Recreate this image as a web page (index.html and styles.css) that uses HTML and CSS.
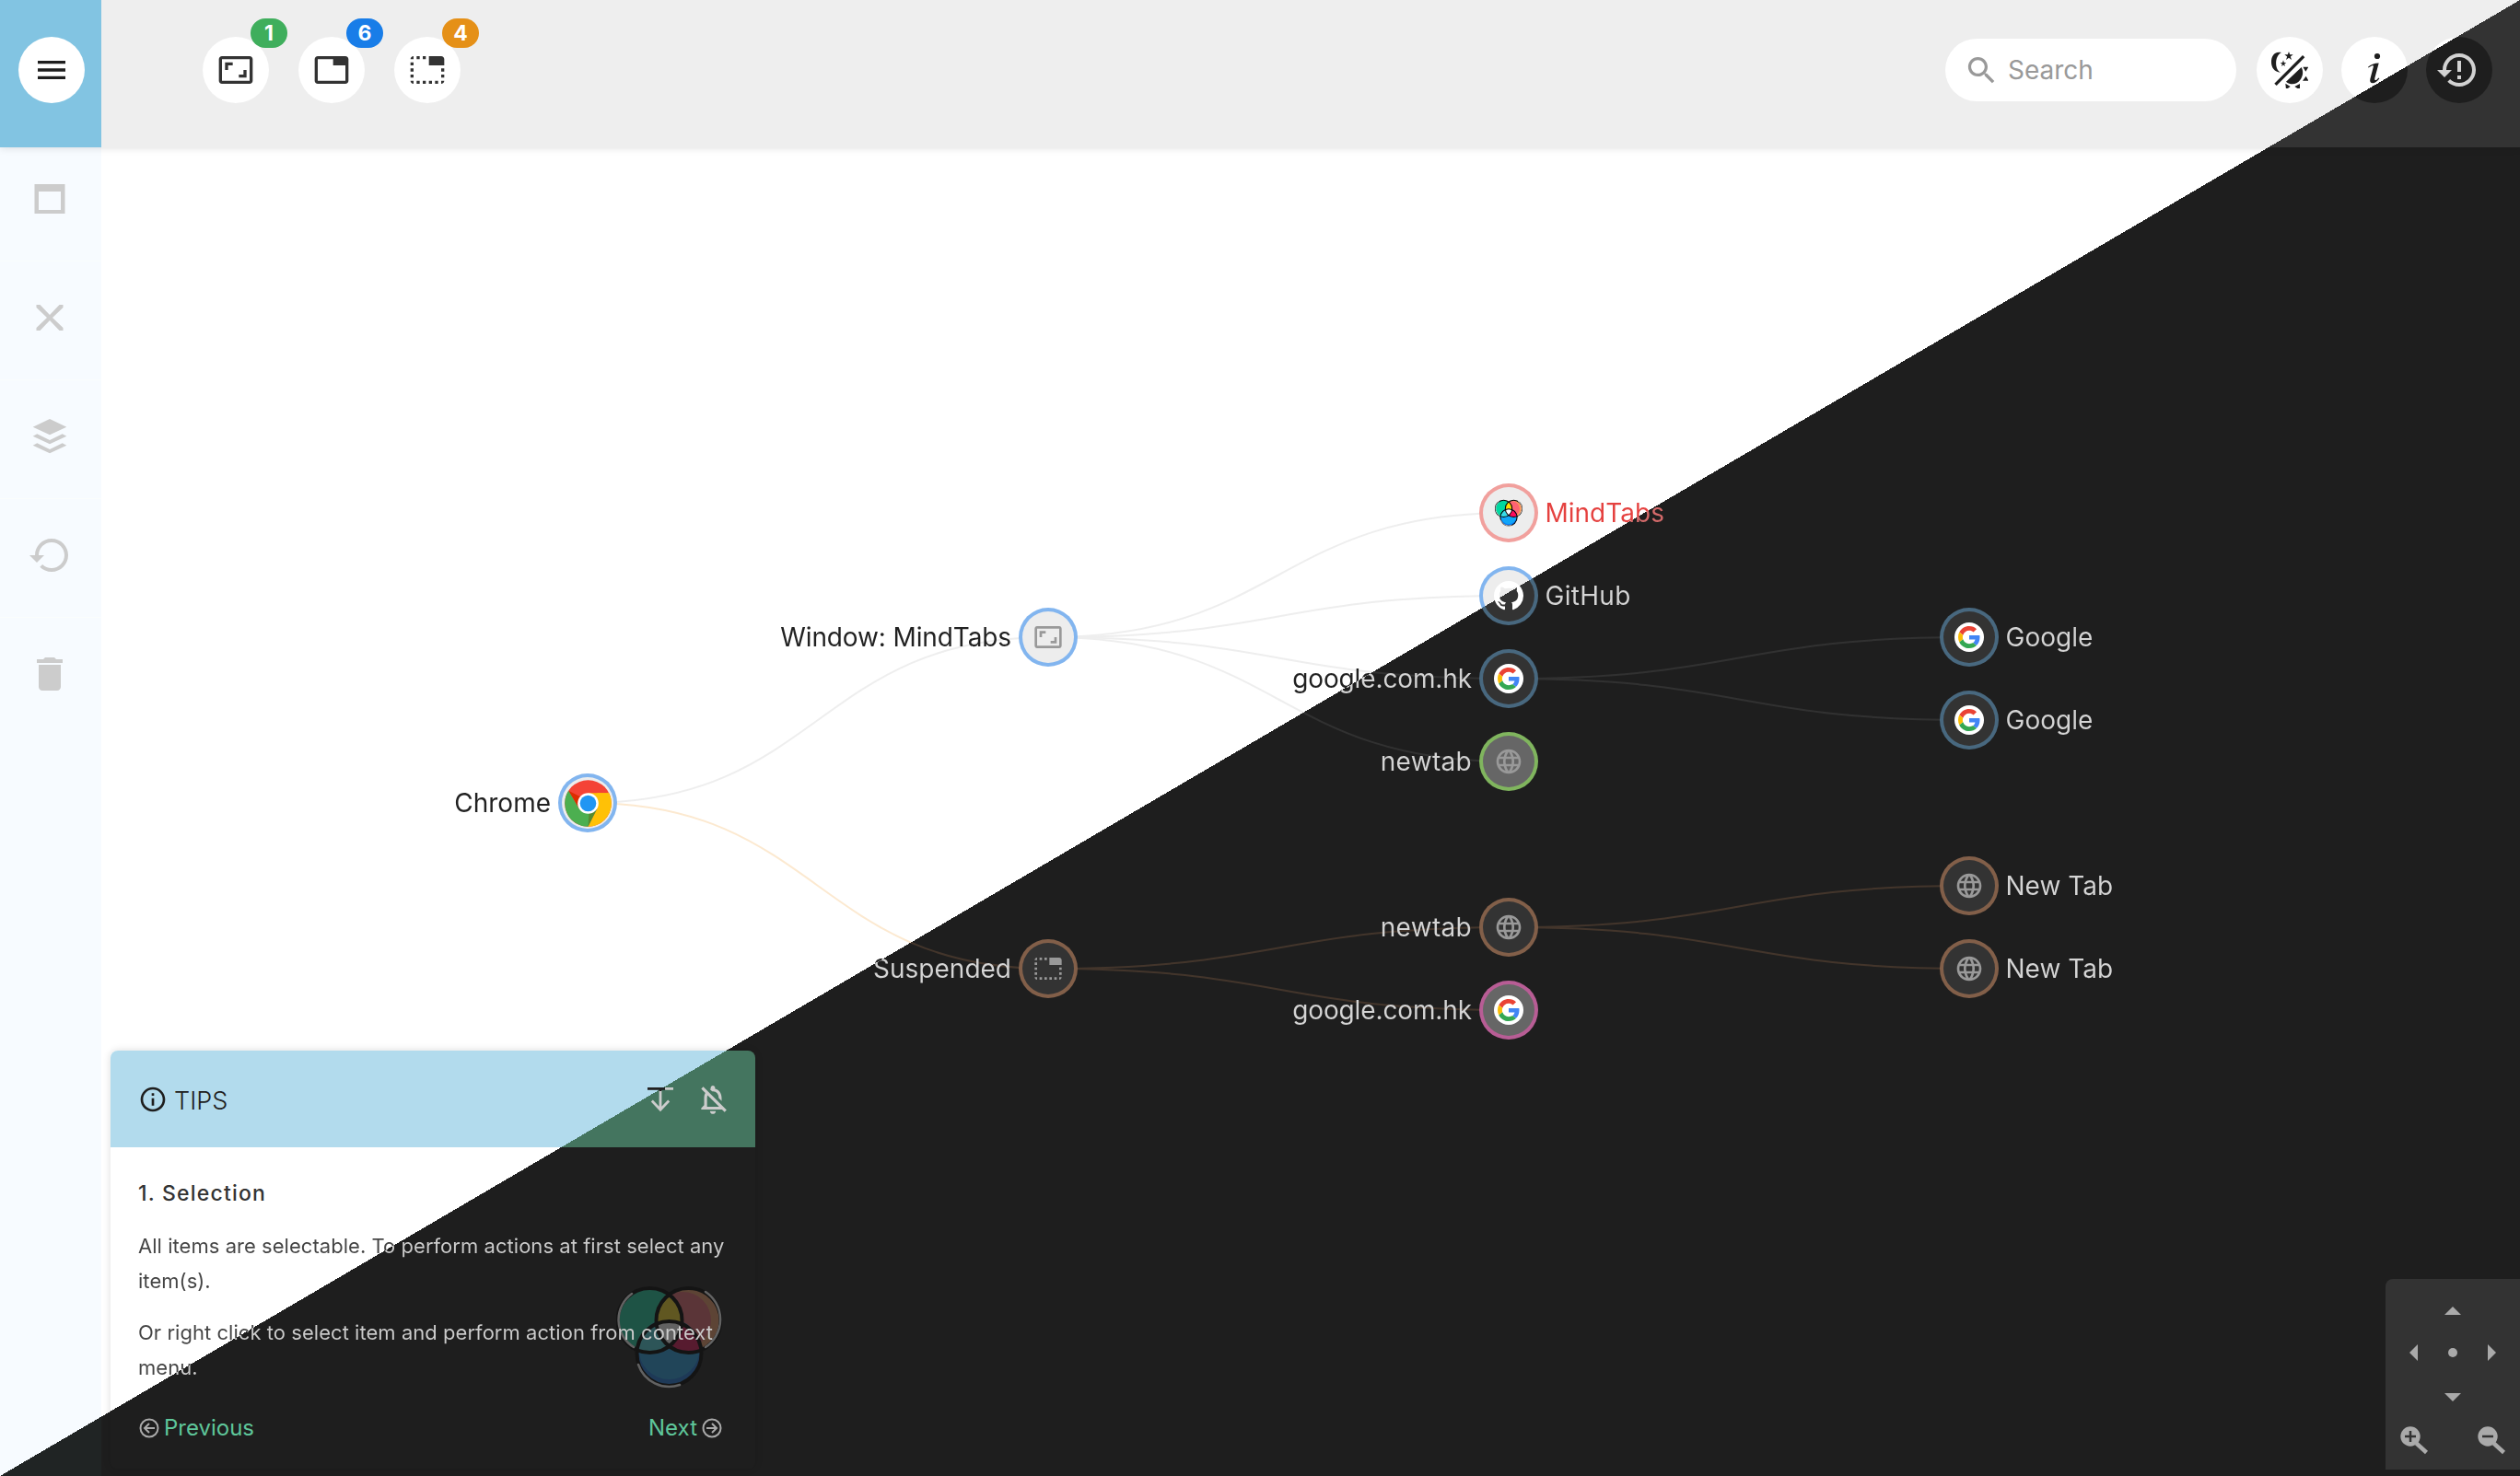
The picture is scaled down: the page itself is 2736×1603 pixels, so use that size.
FILE: index.html
```html
<!DOCTYPE html>
<html lang="en">
<head>
<meta charset="utf-8">
<title>MindTabs</title>
<link rel="stylesheet" href="styles.css">
</head>
<body>
<svg class="defs" aria-hidden="true">
  <defs>
    <linearGradient id="link" gradientUnits="userSpaceOnUse" x1="1207.7" y1="527.9" x2="1528.3" y2="1075.1">
      <stop offset=".5" stop-color="#eeeeee"/><stop offset=".5" stop-color="#313131"/>
    </linearGradient>
    <linearGradient id="link-suspended" gradientUnits="userSpaceOnUse" x1="1207.7" y1="527.9" x2="1528.3" y2="1075.1">
      <stop offset=".5" stop-color="#fce9d0"/><stop offset=".5" stop-color="#43352b"/>
    </linearGradient>
    <clipPath id="c-green"><circle cx="36.5" cy="39" r="35"/></clipPath>
    <clipPath id="c-red"><circle cx="78.5" cy="39" r="35"/></clipPath>
    <symbol id="aspect" viewBox="0 0 24 24"><path d="M19 12h-2v3h-3v2h5v-5zM7 9h3V7H5v5h2V9zm14-6H3c-1.1 0-2 .9-2 2v14c0 1.1.9 2 2 2h18c1.1 0 2-.9 2-2V5c0-1.1-.9-2-2-2zm0 16.01H3V4.99h18v14.02z"/></symbol>
    <symbol id="tab" viewBox="0 0 24 24"><path d="M21 3H3c-1.1 0-2 .9-2 2v14c0 1.1.9 2 2 2h18c1.1 0 2-.9 2-2V5c0-1.1-.9-2-2-2zm0 16H3V5h10v4h8v10z"/></symbol>
    <symbol id="tab-off" viewBox="0 0 24 24"><path d="M1 9h2V7H1v2zm0 4h2v-2H1v2zm0-8h2V3c-1.1 0-2 .9-2 2zm8 16h2v-2H9v2zm-8-4h2v-2H1v2zm2 4v-2H1c0 1.1.9 2 2 2zM21 3h-8v6h10V5c0-1.1-.9-2-2-2zm0 14h2v-2h-2v2zM9 5h2V3H9v2zM5 21h2v-2H5v2zM5 5h2V3H5v2zm16 16c1.1 0 2-.9 2-2h-2v2zm0-8h2v-2h-2v2zm-8 8h2v-2h-2v2zm4 0h2v-2h-2v2z"/></symbol>
    <symbol id="restore" viewBox="0 0 24 24"><path d="M13 3c-4.97 0-9 4.03-9 9H1l4 4 4-4H6c0-3.87 3.13-7 7-7s7 3.13 7 7-3.13 7-7 7c-1.93 0-3.68-.79-4.94-2.06l-1.42 1.42C8.27 19.99 10.51 21 13 21c4.97 0 9-4.03 9-9s-4.03-9-9-9z"/></symbol>
    <symbol id="globe" viewBox="0 0 24 24"><path d="M11.99 2C6.47 2 2 6.48 2 12s4.47 10 9.99 10C17.52 22 22 17.52 22 12S17.52 2 11.99 2zm6.93 6h-2.95c-.32-1.25-.78-2.45-1.38-3.56 1.84.63 3.37 1.91 4.33 3.56zM12 4.04c.83 1.2 1.48 2.53 1.91 3.96h-3.82c.43-1.43 1.08-2.76 1.91-3.96zM4.26 14C4.1 13.36 4 12.69 4 12s.1-1.36.26-2h3.38c-.08.66-.14 1.32-.14 2 0 .68.06 1.34.14 2H4.26zm.82 2h2.95c.32 1.25.78 2.45 1.38 3.56-1.84-.63-3.37-1.9-4.33-3.56zm2.95-8H5.08c.96-1.66 2.49-2.93 4.33-3.56C8.81 5.55 8.35 6.75 8.03 8zM12 19.96c-.83-1.2-1.48-2.53-1.91-3.96h3.82c-.43 1.43-1.08 2.76-1.91 3.96zM14.34 14H9.66c-.09-.66-.16-1.32-.16-2 0-.68.07-1.35.16-2h4.68c.09.65.16 1.32.16 2 0 .68-.07 1.34-.16 2zm.25 5.56c.6-1.11 1.06-2.31 1.38-3.56h2.95c-.96 1.65-2.49 2.93-4.33 3.56zM16.36 14c.08-.66.14-1.32.14-2 0-.68-.06-1.34-.14-2h3.38c.16.64.26 1.31.26 2s-.1 1.36-.26 2h-3.38z"/></symbol>
    <symbol id="google" viewBox="-8 -8 64 64">
      <circle cx="24" cy="24" r="32" fill="#fff"/>
      <path fill="#EA4335" d="M24 9.5c3.54 0 6.71 1.22 9.21 3.6l6.85-6.85C35.9 2.38 30.47 0 24 0 14.62 0 6.51 5.38 2.56 13.22l7.98 6.19C12.43 13.72 17.74 9.5 24 9.5z"/>
      <path fill="#4285F4" d="M46.98 24.55c0-1.57-.15-3.09-.38-4.55H24v9.02h12.94c-.58 2.96-2.26 5.48-4.78 7.18l7.73 6c4.51-4.18 7.09-10.36 7.09-17.65z"/>
      <path fill="#FBBC05" d="M10.53 28.59c-.48-1.45-.76-2.99-.76-4.59s.27-3.14.76-4.59l-7.98-6.19C.92 16.46 0 20.12 0 24c0 3.88.92 7.54 2.56 10.78l7.97-6.19z"/>
      <path fill="#34A853" d="M24 48c6.48 0 11.93-2.13 15.89-5.81l-7.73-6c-2.15 1.45-4.92 2.3-8.16 2.3-6.26 0-11.57-4.22-13.47-9.91l-7.98 6.19C6.51 42.62 14.62 48 24 48z"/>
    </symbol>
    <symbol id="mindtabs" viewBox="0 0 115 113">
      <circle cx="78.5" cy="39" r="35" fill="#ff9a5a"/>
      <circle cx="72" cy="39" r="31" fill="#ff6372" clip-path="url(#c-red)"/>
      <circle cx="36.5" cy="39" r="35" fill="#00d8a0"/>
      <circle cx="57.5" cy="75" r="35" fill="#0a7cf5"/>
      <circle cx="57.5" cy="70" r="33" fill="#10a6f8"/>
      <circle cx="78.5" cy="39" r="35" fill="#ffde00" clip-path="url(#c-green)"/>
      <circle cx="57.5" cy="75" r="35" fill="#38dbe8" clip-path="url(#c-green)"/>
      <circle cx="57.5" cy="75" r="35" fill="#ff0a5c" clip-path="url(#c-red)"/>
      <g clip-path="url(#c-red)"><circle cx="57.5" cy="75" r="35" fill="#fff" clip-path="url(#c-green)"/></g>
      <g fill="none" stroke="#000" stroke-width="4"><circle cx="36.5" cy="39" r="35"/><circle cx="78.5" cy="39" r="35"/><circle cx="57.5" cy="75" r="35"/></g>
      <g class="rim" fill="none" stroke="#fff" stroke-width="2.500" stroke-linecap="round"><path d="M19 68A35 35 0 0 1 17 10M97 8A36 36 0 0 1 97 68M24 87A35.500 35.500 0 0 0 69 109"/></g>
    </symbol>
  </defs>
</svg>

<div class="app">
  <section class="map">
    <svg class="links" width="2736" height="1603" viewBox="0 0 2736 1603">
      <g stroke="url(#link)">
        <path d="M638 872C888 872 888 692 1138 692"/>
        <path d="M1138 692C1388 692 1388 557 1638 557"/>
        <path d="M1138 692C1388 692 1388 647 1638 647"/>
        <path d="M1138 692C1388 692 1388 737 1638 737"/>
        <path d="M1138 692C1388 692 1388 827 1638 827"/>
        <path d="M1638 737C1888 737 1888 692 2138 692"/>
        <path d="M1638 737C1888 737 1888 782 2138 782"/>
      </g>
      <g stroke="url(#link-suspended)">
        <path d="M638 872C888 872 888 1052 1138 1052"/>
        <path d="M1138 1052C1388 1052 1388 1007 1638 1007"/>
        <path d="M1138 1052C1388 1052 1388 1097 1638 1097"/>
        <path d="M1638 1007C1888 1007 1888 962 2138 962"/>
        <path d="M1638 1007C1888 1007 1888 1052 2138 1052"/>
      </g>
    </svg>

    <div class="node blue parent" style="left:638px;top:872px">
      <div class="disc"><svg class="chrome" viewBox="-25.5 -25.5 51 51">
        <circle r="25.3" fill="#f44336"/>
        <path fill="#dd2c00" d="M-21.3-13.7-9.8 5.7-6-6z"/>
        <path fill="#4caf50" d="M-21.3-13.7A25.3 25.3 0 0 0 0 25.3L9.8 5.7-9.8 5.7z"/>
        <path fill="#ffc107" d="M22.7-11.3A25.3 25.3 0 0 1 0 25.3L9.8 5.7V-11.3z"/>
        <path fill="#ffc107" d="M0-11.3h22.7L9.8 5.7z"/>
        <path fill="#558b2f" d="M0 25.3 9.8 5.7 1 10.5z"/>
        <circle r="11.3" fill="#fff"/><circle r="8.8" fill="#2196f3"/>
      </svg></div><span class="label">Chrome</span>
    </div>
    <div class="node blue parent" style="left:1138px;top:692px">
      <div class="disc"><svg class="icon32"><use href="#aspect"/></svg></div><span class="label tight">Window: MindTabs</span>
    </div>
    <div class="node brown parent" style="left:1138px;top:1052px">
      <div class="disc"><svg class="icon32"><use href="#tab-off"/></svg></div><span class="label">Suspended</span>
    </div>
    <div class="node red leaf" style="left:1638px;top:557px">
      <div class="disc"><svg class="logo-small"><use href="#mindtabs"/></svg></div><span class="label active">MindTabs</span>
    </div>
    <div class="node blue leaf" style="left:1638px;top:647px">
      <div class="disc"><svg class="icon32 github" viewBox="0 0 16 16"><path d="M8 0C3.58 0 0 3.58 0 8c0 3.54 2.29 6.53 5.47 7.59.4.07.55-.17.55-.38 0-.19-.01-.82-.01-1.49-2.01.37-2.53-.49-2.69-.94-.09-.23-.48-.94-.82-1.13-.28-.15-.68-.52-.01-.53.63-.01 1.08.58 1.23.82.72 1.21 1.87.87 2.33.66.07-.52.28-.87.51-1.07-1.78-.2-3.64-.89-3.64-3.95 0-.87.31-1.59.82-2.15-.08-.2-.36-1.02.08-2.12 0 0 .67-.21 2.2.82.64-.18 1.32-.27 2-.27.68 0 1.36.09 2 .27 1.53-1.04 2.2-.82 2.2-.82.44 1.1.16 1.92.08 2.12.51.56.82 1.27.82 2.15 0 3.07-1.87 3.75-3.65 3.95.29.25.54.73.54 1.48 0 1.07-.01 1.93-.01 2.2 0 .21.15.46.55.38A8.013 8.013 0 0016 8c0-4.42-3.58-8-8-8z"/></svg></div><span class="label wide">GitHub</span>
    </div>
    <div class="node blue parent" style="left:1638px;top:737px">
      <div class="disc"><svg class="icon32"><use href="#google"/></svg></div><span class="label tight">google.com.hk</span>
    </div>
    <div class="node green parent selected" style="left:1638px;top:827px">
      <div class="disc"><svg class="icon32"><use href="#globe"/></svg></div><span class="label wide">newtab</span>
    </div>
    <div class="node brown parent" style="left:1638px;top:1007px">
      <div class="disc"><svg class="icon32"><use href="#globe"/></svg></div><span class="label wide">newtab</span>
    </div>
    <div class="node pink parent selected" style="left:1638px;top:1097px">
      <div class="disc"><svg class="icon32"><use href="#google"/></svg></div><span class="label tight">google.com.hk</span>
    </div>
    <div class="node blue leaf" style="left:2138px;top:692px">
      <div class="disc"><svg class="icon32"><use href="#google"/></svg></div><span class="label">Google</span>
    </div>
    <div class="node blue leaf" style="left:2138px;top:782px">
      <div class="disc"><svg class="icon32"><use href="#google"/></svg></div><span class="label">Google</span>
    </div>
    <div class="node brown leaf" style="left:2138px;top:962px">
      <div class="disc"><svg class="icon32"><use href="#globe"/></svg></div><span class="label">New Tab</span>
    </div>
    <div class="node brown leaf" style="left:2138px;top:1052px">
      <div class="disc"><svg class="icon32"><use href="#globe"/></svg></div><span class="label">New Tab</span>
    </div>
  </section>

  <header class="topbar">
    <div class="brand">
      <button class="round"><svg class="icon40 ink" viewBox="0 0 24 24"><path d="M3 18h18v-2H3v2zm0-5h18v-2H3v2zm0-7v2h18V6H3z"/></svg></button>
    </div>
    <nav class="counts">
      <button class="round"><svg class="icon40"><use href="#aspect"/></svg><span class="badge windows">1</span></button>
      <button class="round"><svg class="icon40"><use href="#tab"/></svg><span class="badge tabs">6</span></button>
      <button class="round"><svg class="icon40"><use href="#tab-off"/></svg><span class="badge parked">4</span></button>
    </nav>
    <div class="actions">
      <div class="search">
        <svg class="search-icon" viewBox="0 0 24 24"><path d="M15.5 14h-.79l-.28-.27C15.41 12.59 16 11.11 16 9.5 16 5.91 13.09 3 9.5 3S3 5.91 3 9.5 5.91 16 9.5 16c1.61 0 3.09-.59 4.23-1.57l.27.28v.79l5 4.99L20.49 19l-4.99-5zm-6 0C7.01 14 5 11.99 5 9.5S7.01 5 9.5 5 14 7.01 14 9.5 11.99 14 9.5 14z"/></svg>
        <span>Search</span>
      </div>
      <button class="round"><svg class="icon40 ink" viewBox="0 0 120 120">
        <path d="M33 3C8-2 0 17 0 34c0 18 10 33 30 34C10 58 10 14 33 3z"/>
        <path d="M57 0l3.500 10H71l-8.500 6.500L66 27l-9-6.500L48 27l3.500-10.500L43 10h10.500zM39 28l2.500 8H49l-6.300 4.600L45 48l-6-4.500L33 48l2.300-7.400L29 36h7.500z"/>
        <path d="M10 104 102 12l7 7L17 111z"/>
        <path d="M48 98C62 110 82 108 93 94s12-30 5-43zM103 50h18l-9 15zM102 95l11-15 8 15zM46 104l16 10-14 10zM76 114l17-9v20z"/>
      </svg></button>
      <button class="round"><svg class="icon40 ink" viewBox="-20 -20 40 40">
        <circle cx="3" cy="-15" r="3.100"/>
        <path d="M-7-3.300C-4-6-.5-7.300 4.700-7.500L.4 8.500C-.2 11.200 1 11.600 2.600 10.400L4.400 8.600 5.400 9.300C2.800 12.800.3 14.300-1.800 14.300-4.500 14.300-5.300 12.300-4.600 9.500L-1.200-3.200C-.9-4.600-1.300-5-2.600-4.700L-6.600-2.500z"/>
      </svg></button>
      <button class="round"><svg class="icon48 history" viewBox="1 0 24 24"><path d="M13 3c-4.97 0-9 4.03-9 9H1l4 4 4-4H6c0-3.870 3.130-7 7-7s7 3.130 7 7-3.130 7-7 7c-1.930 0-3.680-.79-4.940-2.060l-1.420 1.420C8.270 19.990 10.510 21 13 21c4.970 0 9-4.030 9-9s-4.030-9-9-9zM12 7h2v6h-2zM12 15h2v2h-2z"/></svg></button>
    </div>
  </header>

  <aside class="sidebar">
    <div class="tool"><svg class="icon48" viewBox="0 0 48 48"><path fill-rule="evenodd" d="M7.500 8h33v32h-33zM12 16v20h24V16z"/></svg></div>
    <div class="tool"><svg class="icon48" viewBox="0 0 48 48"><path d="M9.500 10h4L24 21l10.500-11h4v3L27 24l11.500 11v3h-4L24 27 13.500 38h-4v-3L21 24 9.500 13z"/></svg></div>
    <div class="tool"><svg class="icon48" viewBox="0 0 48 48"><path d="M24 5l18.300 8.700L24 22.300 5.700 13.700zM5.700 23.700l4.600-2.400L24 28l13.700-6.700 4.600 2.400L24 32.300zM5.700 33.700l4.600-2.400L24 38l13.700-6.700 4.600 2.400L24 42.300z"/></svg></div>
    <div class="tool"><svg class="icon48"><use href="#restore"/></svg></div>
    <div class="tool"><svg class="icon48" viewBox="0 0 24 24"><path d="M6 19c0 1.100.9 2 2 2h8c1.100 0 2-.9 2-2V7H6v12zM19 4h-3.500l-1-1h-5l-1 1H5v2h14V4z"/></svg></div>
  </aside>

  <section class="tips">
    <div class="tips-head">
      <svg class="icon32 ink" viewBox="0 0 24 24"><path d="M11 7h2v2h-2zm0 4h2v6h-2zm1-9C6.480 2 2 6.480 2 12s4.480 10 10 10 10-4.480 10-10S17.520 2 12 2zm0 18c-4.410 0-8-3.590-8-8s3.590-8 8-8 8 3.590 8 8-3.590 8-8 8z"/></svg>
      <span class="tips-title">TIPS</span>
      <svg class="collapse" viewBox="0 0 28 28">
        <path stroke="#212121" d="M0 2.400h20"/><path stroke="#ccc" d="M19 2.400h9M14 4v22M4.800 15.500l9.200 9.800 9.200-9.800"/><path stroke="#212121" d="M14 1v4"/>
      </svg>
      <svg class="mute" viewBox="0 0 24 24"><path d="M12 22c1.100 0 2-.9 2-2h-4c0 1.100.9 2 2 2zm0-15.500c2.490 0 4 2.020 4 4.500v.1l2 2V11c0-3.070-1.630-5.640-4.500-6.320V4c0-.83-.67-1.500-1.500-1.500s-1.500.67-1.500 1.500v.68c-.24.06-.47.15-.69.23l1.640 1.640c.18-.02.36-.05.55-.05zM5.410 3.350 4 4.760l2.810 2.810C6.290 8.570 6 9.740 6 11v5l-2 2v1h14.240l1.740 1.740 1.410-1.410L5.410 3.350zM16 17H8v-6c0-.68.12-1.320.34-1.900L16 16.760V17z"/></svg>
    </div>
    <div class="tips-body">
      <svg class="watermark"><use href="#mindtabs"/></svg>
      <h3>1. Selection</h3>
      <p>All items are selectable. To perform actions at first select any item(s).</p>
      <p>Or right click to select item and perform action from context menu.</p>
      <div class="pager">
        <span class="page-link"><svg viewBox="0 0 22 22"><circle cx="11" cy="11" r="9.500"/><path d="M17 11H6M11 6l-5 5 5 5"/></svg>Previous</span>
        <span class="page-link">Next<svg viewBox="0 0 22 22"><circle cx="11" cy="11" r="9.500"/><path d="M5 11h11M11 6l5 5-5 5"/></svg></span>
      </div>
    </div>
  </section>

  <section class="controls">
    <div class="pad">
      <svg class="arrow up" viewBox="0 0 18 9"><path d="M0 9 9 0l9 9z"/></svg>
      <svg class="arrow-side west" viewBox="0 0 9 18"><path d="M9 0v18L0 9z"/></svg>
      <span class="dot"></span>
      <svg class="arrow-side east" viewBox="0 0 9 18"><path d="M0 0v18l9-9z"/></svg>
      <svg class="arrow down" viewBox="0 0 18 9"><path d="M0 0h18L9 9z"/></svg>
    </div>
    <div class="zoom">
      <svg viewBox="0 0 31 31"><circle cx="11" cy="11" r="10.700"/><path class="handle" d="M17.500 18.500 28.500 28.500"/><path class="sign" d="M5 11h12M11 5v12"/></svg>
      <svg viewBox="0 0 31 31"><circle cx="11" cy="11" r="10.700"/><path class="handle" d="M17.500 18.500 28.500 28.500"/><path class="sign" d="M5 11h12"/></svg>
    </div>
  </section>
</div>
</body>
</html>
```
FILE: styles.css
```css
* { box-sizing: border-box; }

/* Every split surface paints the same viewport-wide diagonal,
   so light and dark meet on one line across the whole page. */
body, .topbar, .brand, .sidebar, .round, .disc, .node, .label,
.tips, .tips-head, .tips p {
  background-image: linear-gradient(to bottom right, var(--light) 50%, var(--dark) 50%);
  background-attachment: fixed;
}

body {
  --light: #fff;
  --dark: #1e1e1e;
  margin: 0;
  font-family: Inter, "Liberation Sans", sans-serif;
  overflow: hidden;
}

svg { display: block; flex: none; }
.defs { position: absolute; width: 0; height: 0; }
.app { position: relative; width: 2736px; height: 1603px; overflow: hidden; }

.icon32 { width: 32px; height: 32px; }
.icon40 { width: 40px; height: 40px; }
.icon48 { width: 48px; height: 48px; }
.ink { fill: #1e1e1e; }

/* top bar */
.topbar {
  --light: #eee;
  --dark: #333;
  position: relative;
  z-index: 2;
  display: flex;
  height: 160px;
  box-shadow: 0 1px 8px rgba(0, 0, 0, .12);
}
.brand {
  --light: #82c4e2;
  --dark: #44755f;
  width: 110px;
  padding: 40px 0 0 20px;
}
.round {
  --light: #fff;
  --dark: #1e1e1e;
  position: relative;
  display: flex;
  align-items: center;
  justify-content: center;
  width: 72px;
  height: 72px;
  padding: 0;
  border: 0;
  border-radius: 50%;
  fill: #333;
}
.round .ink { fill: #1e1e1e; }
.round .history { fill: #d2d2d2; }
.counts { display: flex; gap: 32px; padding: 40px 0 0 110px; }
.badge {
  position: absolute;
  top: -20px;
  left: 52px;
  width: 40px;
  height: 32px;
  border-radius: 16px;
  color: #fff;
  font: 700 23px/32px Inter, sans-serif;
  text-align: center;
}
.windows { background: #3fae5c; }
.tabs { background: #187de8; }
.parked { background: #e59017; }

.actions { display: flex; gap: 20px; margin-left: auto; padding: 40px 30px 0 0; }
.search {
  display: flex;
  align-items: center;
  gap: 9px;
  width: 316px;
  height: 68px;
  margin: 2px 2px 0 0;
  padding-left: 20px;
  border-radius: 34px;
  background: #fff;
  color: #999;
  font-size: 28px;
}
.search-icon { width: 39px; height: 39px; fill: #999; }

/* tool column */
.sidebar {
  --light: #f7fbff;
  --dark: #202424;
  position: relative;
  z-index: 1;
  width: 110px;
  height: 1448px;
  margin-top: -5px;
}
.tool {
  height: 129px;
  padding: 37px 0 0 30px;
  border-bottom: 1px solid #fafdfd;
  fill: #ccc;
}
.tool:last-child { border-bottom: 0; }

/* mind map */
.map { position: absolute; inset: 0; }
.links { position: absolute; inset: 0; fill: none; stroke-width: 2; }
.node {
  --light: #82b5ef;
  --dark: #48687f;
  position: absolute;
  width: 64px;
  height: 64px;
  margin: -32px 0 0 -32px;
  padding: 4px;
  border-radius: 50%;
  fill: #999;
}
.red { --light: #f1a09d; }
.brown { --dark: #825f49; }
.green { --dark: #80b55e; }
.pink { --dark: #b85d95; }
.disc {
  --light: #ededed;
  --dark: #333;
  display: flex;
  align-items: center;
  justify-content: center;
  width: 56px;
  height: 56px;
  border-radius: 50%;
}
.selected .disc { --dark: #666; }
.github { fill: #fff; }
.chrome { width: 51px; height: 51px; }
.logo-small { width: 30px; height: 30px; }
.node .rim, .logo-small .rim { display: none; }
.label {
  --light: #212121;
  --dark: #d4d4d4;
  position: absolute;
  top: 12px;
  font-size: 28px;
  line-height: 40px;
  white-space: nowrap;
  background-clip: text;
  -webkit-background-clip: text;
  color: transparent;
}
.parent .label { right: 72px; }
.leaf .label { left: 71.5px; }
.tight { letter-spacing: -.12px; }
.wide { letter-spacing: .3px; }
.active { --light: #e5413f; --dark: #d46a6a; }

/* tips card */
.tips {
  --light: #fff;
  --dark: #1e1e1e;
  position: absolute;
  z-index: 2;
  left: 120px;
  top: 1141px;
  width: 700px;
  height: 454px;
  border-radius: 8px;
  box-shadow: 0 0 8px rgba(0, 0, 0, .14);
}
.tips-head {
  --light: #b2dbed;
  --dark: #44755f;
  display: flex;
  align-items: center;
  height: 105px;
  padding: 0 27px 0 30px;
  border-radius: 8px 8px 0 0;
}
.tips-title {
  margin: 3px 0 0 7px;
  color: #212121;
  font-size: 27px;
  font-weight: 300;
}
.collapse {
  width: 28px;
  height: 28px;
  margin-left: auto;
  fill: none;
  stroke-width: 2.8;
}
.mute { width: 38px; height: 38px; margin-left: 24px; fill: #ccc; }
.tips-body { position: relative; padding: 30px 30px 0; }
.watermark {
  position: absolute;
  left: 549px;
  top: 149px;
  width: 115px;
  height: 113px;
  opacity: .3;
  filter: saturate(.8);
}
.tips h3 {
  margin: 0 0 19px;
  color: #333;
  font-size: 23px;
  font-weight: 500;
  line-height: 40px;
  letter-spacing: 1.2px;
}
.tips p {
  --light: #444;
  --dark: #ccc;
  position: relative;
  margin: 0 -10px 19px 0;
  font-size: 22px;
  line-height: 37.5px;
  letter-spacing: .04px;
  background-clip: text;
  -webkit-background-clip: text;
  color: transparent;
}
.pager { display: flex; justify-content: space-between; margin: 32px 6px 0 1px; }
.page-link {
  display: flex;
  align-items: center;
  gap: 5px;
  color: #5ec69a;
  font-size: 24px;
  line-height: 30px;
}
.page-link svg {
  width: 22px;
  height: 22px;
  fill: none;
  stroke: #aaa;
  stroke-width: 2;
}

/* pan and zoom controls */
.controls {
  position: absolute;
  z-index: 2;
  right: 0;
  top: 1389px;
  width: 146px;
  height: 207px;
  padding-top: 30px;
  border-radius: 8px 0 0 0;
  background: #333;
  fill: #aaa;
}
.pad {
  display: grid;
  grid-template: 9px 82px 12px / 9px 1fr 9px;
  width: 94px;
  height: 103px;
  margin-left: 26px;
  align-items: center;
  justify-items: center;
}
.up { grid-area: 1 / 2; }
.west { grid-area: 2 / 1; }
.dot { grid-area: 2 / 2; width: 10px; height: 10px; border-radius: 50%; background: #aaa; }
.east { grid-area: 2 / 3; }
.down { grid-area: 3 / 2; align-self: end; }
.arrow { width: 18px; height: 9px; }
.arrow-side { width: 9px; height: 18px; }
.zoom { display: flex; gap: 53px; margin: 27px 0 0 16px; }
.zoom svg { width: 31px; height: 31px; }
.handle { stroke: #aaa; stroke-width: 4.5; }
.sign { stroke: #333; stroke-width: 2.5; }
```
